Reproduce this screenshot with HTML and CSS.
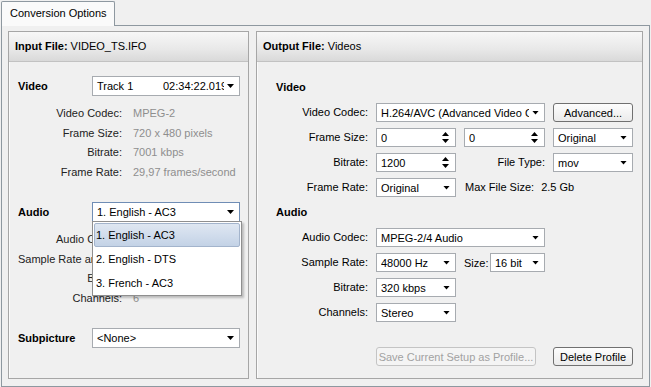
FILE: index.html
```html
<!DOCTYPE html>
<html lang="en">
<head>
    <meta charset="UTF-8">
    <title>Conversion Options</title>
    <link rel="stylesheet" href="styles.css">
</head>
<body>
    <div class="window">
        <div class="tabs">
            <div class="tab">Conversion Options</div>
        </div>

        <div class="tab-body">
            <!-- input side -->
            <div class="panel panel-in">
                <div class="panel-head"><b>Input File:</b> VIDEO_TS.IFO</div>
                <div class="panel-in-body">
                    <div class="section">
                        <div class="section-head">
                            <span class="section-title">Video</span>
                            <div class="combo">
                                <span class="track">Track 1</span>
                                <span class="clip">02:34:22.019</span>
                                <span class="arrow"></span>
                            </div>
                        </div>
                        <div class="info">
                            <div class="info-lbl">Video Codec:</div><div class="info-val">MPEG-2</div>
                            <div class="info-lbl">Frame Size:</div><div class="info-val">720 x 480 pixels</div>
                            <div class="info-lbl">Bitrate:</div><div class="info-val">7001 kbps</div>
                            <div class="info-lbl">Frame Rate:</div><div class="info-val">29,97 frames/second</div>
                        </div>
                    </div>

                    <div class="section">
                        <div class="section-head">
                            <span class="section-title">Audio</span>
                            <div class="combo focused">
                                <span class="clip">1. English - AC3</span>
                                <span class="arrow"></span>
                                <div class="popup">
                                    <div class="popup-item selected">1. English - AC3</div>
                                    <div class="popup-item">2. English - DTS</div>
                                    <div class="popup-item">3. French - AC3</div>
                                </div>
                            </div>
                        </div>
                        <div class="info">
                            <div class="info-lbl">Audio Codec:</div><div class="info-val">AC3</div>
                            <div class="info-lbl">Sample Rate and Size:</div><div class="info-val">48000 Hz / 16 bit</div>
                            <div class="info-lbl">Bitrate:</div><div class="info-val">448 kbps</div>
                            <div class="info-lbl">Channels:</div><div class="info-val">6</div>
                        </div>
                    </div>

                    <div class="section">
                        <div class="section-head">
                            <span class="section-title">Subpicture</span>
                            <div class="combo">
                                <span class="clip">&lt;None&gt;</span>
                                <span class="arrow"></span>
                            </div>
                        </div>
                    </div>
                </div>
            </div>

            <!-- output side -->
            <div class="panel panel-out">
                <div class="panel-head"><b>Output File:</b> Videos</div>
                <div class="out-grid">
                    <div class="grid-title">Video</div>

                    <div class="lbl">Video Codec:</div>
                    <div class="combo span2"><span class="clip">H.264/AVC (Advanced Video Coding)</span><span class="arrow"></span></div>
                    <button class="btn">Advanced...</button>

                    <div class="lbl">Frame Size:</div>
                    <div class="spin"><span class="clip">0</span><span class="updown"><i class="up"></i><i class="down"></i></span></div>
                    <div class="spin"><span class="clip">0</span><span class="updown"><i class="up"></i><i class="down"></i></span></div>
                    <div class="combo"><span class="clip">Original</span><span class="arrow"></span></div>

                    <div class="lbl">Bitrate:</div>
                    <div class="spin"><span class="clip">1200</span><span class="updown"><i class="up"></i><i class="down"></i></span></div>
                    <div class="lbl lbl-mid">File Type:</div>
                    <div class="combo"><span class="clip">mov</span><span class="arrow"></span></div>

                    <div class="lbl">Frame Rate:</div>
                    <div class="combo"><span class="clip">Original</span><span class="arrow"></span></div>
                    <div class="note span2">Max File Size: <span class="note-val">2.5 Gb</span></div>

                    <div class="grid-title">Audio</div>

                    <div class="lbl">Audio Codec:</div>
                    <div class="combo span2"><span class="clip">MPEG-2/4 Audio</span><span class="arrow"></span></div>

                    <div class="lbl">Sample Rate:</div>
                    <div class="combo"><span class="clip">48000 Hz</span><span class="arrow"></span></div>
                    <div class="size-cell">
                        <span>Size:</span>
                        <div class="combo size-combo"><span class="clip">16 bit</span><span class="arrow"></span></div>
                    </div>

                    <div class="lbl">Bitrate:</div>
                    <div class="combo"><span class="clip">320 kbps</span><span class="arrow"></span></div>

                    <div class="lbl">Channels:</div>
                    <div class="combo"><span class="clip">Stereo</span><span class="arrow"></span></div>

                    <button class="btn btn-save" disabled>Save Current Setup as Profile...</button>
                    <button class="btn btn-delete">Delete Profile</button>
                </div>
            </div>
        </div>
    </div>
</body>
</html>
```

FILE: styles.css
```css
body {
    margin: 0;
    background: #f0f0f0;
    font-family: "Liberation Sans", Arial, sans-serif;
    font-size: 11px;
    color: #000;
}
.window {
    width: 651px;
    height: 387px;
    padding: 1px 0 0 1px;
    box-sizing: border-box;
}
.tabs {
    display: flex;
    position: relative;
    z-index: 1;
    margin-bottom: -1px;
}
.tab {
    height: 24px;
    line-height: 23px;
    padding: 0 7px 0 8px;
    border: 1px solid #8e98a0;
    border-bottom: none;
    background: #fafafa;
    border-radius: 2px 2px 0 0;
}
.tab-body {
    display: flex;
    gap: 7px;
    width: 649px;
    height: 362px;
    box-sizing: border-box;
    padding: 5px 6px 7px 6px;
    border: 1px solid #8e98a0;
}
.panel {
    height: 348px;
    box-sizing: border-box;
    border: 1px solid #a6a6a6;
    background: #f0f0f0;
    box-shadow: inset 1px 1px 0 #fbfbfb;
}
.panel-in {
    width: 241px;
}
.panel-out {
    width: 387px;
}
.panel-head {
    height: 29px;
    line-height: 29px;
    padding-left: 6px;
    border-bottom: 1px solid #c2c2c2;
    background: linear-gradient(#f7f7f7, #e8e8e8 60%, #d9d9d9);
}

/* input side */
.panel-in-body {
    padding: 14px 7px 0 9px;
}
.section {
    margin-bottom: 20px;
}
.section-head {
    display: grid;
    grid-template-columns: 74px 148px;
    align-items: center;
    height: 20px;
}
.section-title {
    font-weight: bold;
}
.section-head .combo {
    height: 20px;
}
.info {
    display: grid;
    grid-template-columns: 104px auto;
    column-gap: 11px;
    margin-top: 8px;
}
.info-lbl {
    line-height: 19.5px;
    text-align: right;
    white-space: nowrap;
    color: #222;
}
.info-val {
    line-height: 19.5px;
    color: #8e8e8e;
}
.track {
    width: 66px;
    flex: none;
}

/* controls */
.combo, .spin {
    position: relative;
    display: flex;
    align-items: center;
    height: 19px;
    box-sizing: border-box;
    padding: 0 5px 0 4px;
    border: 1px solid #a7abb0;
    background: #fff;
}
.combo.focused {
    border-color: #6f8db5;
}
.clip {
    flex: 1;
    overflow: hidden;
    white-space: nowrap;
}
.arrow {
    flex: none;
    width: 7px;
    height: 4px;
    margin-left: 3px;
    background: #000;
    clip-path: polygon(0 0, 100% 0, 50% 100%);
}
.updown {
    display: flex;
    flex-direction: column;
    gap: 3px;
    margin-right: 1px;
}
.updown i {
    display: block;
    width: 7px;
    height: 4px;
    background: #000;
}
.updown .up {
    clip-path: polygon(50% 0, 100% 100%, 0 100%);
}
.updown .down {
    clip-path: polygon(0 0, 100% 0, 50% 100%);
}

.popup {
    position: absolute;
    top: 100%;
    left: -1px;
    width: 150px;
    height: 75px;
    box-sizing: border-box;
    padding: 1px;
    border: 1px solid #8f8f8f;
    background: #fff;
    box-shadow: 2px 2px 2px rgba(0, 0, 0, 0.22);
    z-index: 5;
}
.popup-item {
    height: 24px;
    line-height: 22px;
    box-sizing: border-box;
    padding-left: 1px;
    border: 1px solid transparent;
}
.popup-item.selected {
    background: linear-gradient(#dfe7f2, #c3d2e6);
    border-color: #a3b4cc;
    border-radius: 2px;
}

/* output side */
.out-grid {
    display: grid;
    grid-template-columns: 92px 80px 81px 80px;
    grid-auto-rows: 19px;
    column-gap: 8px;
    row-gap: 6px;
    padding: 16px 0 0 19px;
}
.grid-title {
    grid-column: 1 / -1;
    font-weight: bold;
    line-height: 19px;
}
.lbl {
    grid-column: 1;
    text-align: right;
    line-height: 19px;
    white-space: nowrap;
}
.lbl-mid {
    grid-column: 3;
}
.span2 {
    grid-column: span 2;
}
.note {
    line-height: 19px;
    padding-left: 1px;
}
.note-val {
    margin-left: 4px;
}
.size-cell {
    display: flex;
    align-items: center;
    justify-content: space-between;
}
.size-combo {
    width: 55px;
}

.btn {
    height: 19px;
    padding: 0;
    font-family: inherit;
    font-size: 11px;
    color: #000;
    border: 1px solid #707070;
    border-radius: 3px;
    background: linear-gradient(#fdfdfd, #ebebeb);
}
.btn-save {
    grid-column: 2 / 4;
    width: 160px;
    margin-top: 19px;
    color: #a2a2a2;
    border-color: #c4c4c4;
    background: #f4f4f4;
}
.btn-delete {
    grid-column: 4;
    margin-top: 19px;
}
```
